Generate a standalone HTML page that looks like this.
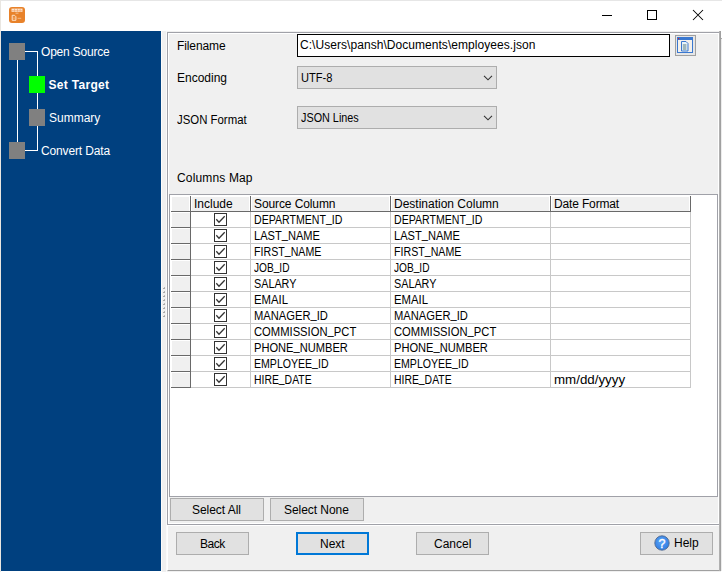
<!DOCTYPE html>
<html><head><meta charset="utf-8"><style>
*{margin:0;padding:0;box-sizing:border-box}
html,body{width:722px;height:572px;overflow:hidden;background:#fff}
body{position:relative;font-family:"Liberation Sans",sans-serif;font-size:12px;color:#000}
.a{position:absolute}
.t{position:absolute;white-space:nowrap;line-height:14px;font-size:12px}
.w{color:#fff}
.b{font-weight:bold}
.sq{position:absolute;width:16px;height:17px;background:#808080}
.ln{position:absolute;background:#fff}
.btn{position:absolute;background:#e1e1e1;border:1px solid #adadad}
.cb{position:absolute;width:13px;height:13px;border:1px solid #333;background:#fff}
</style></head><body>
<div class="a" style="left:0;top:0;width:722px;height:1px;background:#e6e6e6"></div>
<div class="a" style="left:0;top:0;width:1px;height:572px;background:#e9e6e1"></div>
<svg class="a" style="left:9px;top:7px" width="16" height="16" viewBox="0 0 16 16">
<rect x="0" y="0" width="16" height="16" rx="3" fill="#e8822a"/>
<rect x="2.5" y="1.6" width="11" height="3.2" fill="#fde4cc"/>
<rect x="5.2" y="1.6" width="0.6" height="3.2" fill="#eea066"/><rect x="8" y="1.6" width="0.6" height="3.2" fill="#eea066"/><rect x="10.8" y="1.6" width="0.6" height="3.2" fill="#eea066"/>
<rect x="2.5" y="3.1" width="11" height="0.5" fill="#eea066"/>
<rect x="6.5" y="5.7" width="3" height="0.9" fill="#f4c59c"/>
<path d="M3.2 8.3h2.3l1.4 1.4v3.6h-3.7z" fill="none" stroke="#fde4cc" stroke-width="1"/>
<path d="M4.2 10.2h1.6M4.2 11.6h1.6" stroke="#f3c090" stroke-width="0.6"/>
<rect x="8.6" y="10.8" width="3.6" height="1" fill="#f2b889"/>
</svg>
<div class="a" style="left:602px;top:15px;width:10px;height:1px;background:#000"></div>
<div class="a" style="left:647px;top:10px;width:10px;height:10px;border:1px solid #000"></div>
<svg class="a" style="left:692px;top:9px" width="12" height="12" viewBox="0 0 12 12"><path d="M1 1L11 11M11 1L1 11" stroke="#000" stroke-width="1.05"/></svg>
<div class="a" style="left:1px;top:31px;width:160px;height:540px;background:#00407f"></div>
<div class="a" style="left:161px;top:31px;width:561px;height:541px;background:#f0f0f0"></div>
<div class="a" style="left:721px;top:31px;width:1px;height:541px;background:#fff"></div>
<div class="a" style="left:161px;top:31px;width:1px;height:541px;background:#fbfbfb"></div>
<div class="a" style="left:166px;top:31px;width:1px;height:541px;background:#fbfbfb"></div>
<div class="a" style="left:721px;top:38px;width:1px;height:1px;background:#a8a8a8"></div>
<div class="a" style="left:721px;top:39px;width:1px;height:532px;background:#ececec"></div>
<div class="ln" style="left:25px;top:51px;width:13px;height:1px"></div>
<div class="ln" style="left:37px;top:51px;width:1px;height:100px"></div>
<div class="ln" style="left:17px;top:60px;width:1px;height:82px"></div>
<div class="ln" style="left:25px;top:150px;width:13px;height:1px"></div>
<div class="sq" style="left:9px;top:43px"></div>
<div class="sq" style="left:29px;top:76px;background:#00ff00"></div>
<div class="sq" style="left:29px;top:109px"></div>
<div class="sq" style="left:9px;top:142px"></div>
<div class="t w" style="left:41px;top:45px;letter-spacing:-0.2px;">Open Source</div>
<div class="t w b" style="left:48.5px;top:78px;letter-spacing:0.3px;">Set Target</div>
<div class="t w" style="left:49px;top:111px;">Summary</div>
<div class="t w" style="left:41px;top:143.5px;letter-spacing:-0.15px;">Convert Data</div>
<svg class="a" style="left:163px;top:287px" width="2" height="2"><rect x="1" y="0" width="1" height="1" fill="#b8b8b8"/><rect x="0" y="1" width="2" height="1" fill="#a8a8a8"/></svg>
<svg class="a" style="left:163px;top:291px" width="2" height="2"><rect x="1" y="0" width="1" height="1" fill="#b8b8b8"/><rect x="0" y="1" width="2" height="1" fill="#a8a8a8"/></svg>
<svg class="a" style="left:163px;top:295px" width="2" height="2"><rect x="1" y="0" width="1" height="1" fill="#b8b8b8"/><rect x="0" y="1" width="2" height="1" fill="#a8a8a8"/></svg>
<svg class="a" style="left:163px;top:299px" width="2" height="2"><rect x="1" y="0" width="1" height="1" fill="#b8b8b8"/><rect x="0" y="1" width="2" height="1" fill="#a8a8a8"/></svg>
<svg class="a" style="left:163px;top:303px" width="2" height="2"><rect x="1" y="0" width="1" height="1" fill="#b8b8b8"/><rect x="0" y="1" width="2" height="1" fill="#a8a8a8"/></svg>
<svg class="a" style="left:163px;top:307px" width="2" height="2"><rect x="1" y="0" width="1" height="1" fill="#b8b8b8"/><rect x="0" y="1" width="2" height="1" fill="#a8a8a8"/></svg>
<svg class="a" style="left:163px;top:311px" width="2" height="2"><rect x="1" y="0" width="1" height="1" fill="#b8b8b8"/><rect x="0" y="1" width="2" height="1" fill="#a8a8a8"/></svg>
<svg class="a" style="left:163px;top:315px" width="2" height="2"><rect x="1" y="0" width="1" height="1" fill="#b8b8b8"/><rect x="0" y="1" width="2" height="1" fill="#a8a8a8"/></svg>
<div class="a" style="left:167px;top:32px;width:553px;height:493px;border:1px solid #a0a1a8;border-right:none"></div>
<div class="a" style="left:168px;top:33px;width:551px;height:491px;border-top:1px solid #fff;border-left:1px solid #fff;border-bottom:1px solid #fff;border-right:1px solid #fff"></div>
<div class="a" style="left:167px;top:525px;width:554px;height:46px;border-top:1px solid #fff;border-left:1px solid #fff;border-right:1px solid #a0a0a0;border-bottom:1px solid #a0a0a0"></div>
<div class="a" style="left:719px;top:31px;width:1px;height:540px;background:#b0b0b0"></div>
<div class="a" style="left:720px;top:31px;width:1px;height:540px;background:#a0a0a0"></div>
<div class="t " style="left:177px;top:39px;letter-spacing:-0.1px;">Filename</div>
<div class="t " style="left:177px;top:71px;">Encoding</div>
<div class="t" style="left:177px;top:113px;transform:scaleX(0.95);transform-origin:0 0">JSON Format</div>
<div class="t " style="left:177px;top:171px;letter-spacing:0.15px;">Columns Map</div>
<div class="a" style="left:297px;top:34px;width:373px;height:23px;border:1px solid #000;background:#fff"></div>
<div class="t " style="left:300px;top:38px;letter-spacing:0.05px;">C:\Users\pansh\Documents\employees.json</div>
<div class="a" style="left:675px;top:35px;width:21px;height:21px;border:1px solid #a0a0a0;background:#e6e6e6"></div>
<svg class="a" style="left:677px;top:37px" width="16" height="16" viewBox="0 0 16 16">
<rect x="0.5" y="0.5" width="15" height="15" fill="#f4f1ec" stroke="#3a78d0"/>
<rect x="0" y="0" width="16" height="3" fill="#3a78d0"/>
<rect x="1" y="1" width="1.2" height="1.2" fill="#e02020"/>
<path d="M4.5 4.5h4.5l2 2v7.5h-6.5z" fill="#e6f4fa" stroke="#3a78d0"/>
<rect x="5.8" y="7.5" width="3.6" height="1" fill="#5a7a7a"/><rect x="5.8" y="9.5" width="3.6" height="1" fill="#5a7a7a"/><rect x="5.8" y="11.5" width="3.6" height="1" fill="#5a7a7a"/>
</svg>
<div class="btn" style="left:297px;top:66px;width:200px;height:23px"></div>
<svg class="a" style="left:483px;top:75px" width="10" height="6" viewBox="0 0 10 6"><path d="M1 0.8L5 4.8L9 0.8" fill="none" stroke="#333" stroke-width="1.1"/></svg>
<div class="t" style="left:301px;top:71px;transform:scaleX(0.924);transform-origin:0 0">UTF-8</div>
<div class="btn" style="left:297px;top:106px;width:200px;height:23px"></div>
<svg class="a" style="left:483px;top:115px" width="10" height="6" viewBox="0 0 10 6"><path d="M1 0.8L5 4.8L9 0.8" fill="none" stroke="#333" stroke-width="1.1"/></svg>
<div class="t" style="left:301px;top:110.7px;transform:scaleX(0.902);transform-origin:0 0">JSON Lines</div>
<div class="a" style="left:169px;top:194px;width:549px;height:303px;border:1px solid #a0a1a8;background:#fff"></div>
<div class="a" style="left:170px;top:195px;width:521px;height:16px;background:#fff"></div>
<div class="a" style="left:172px;top:197px;width:17px;height:14px;background:#f0f0f0"></div>
<div class="a" style="left:192px;top:197px;width:57px;height:14px;background:#f0f0f0"></div>
<div class="a" style="left:252px;top:197px;width:137px;height:14px;background:#f0f0f0"></div>
<div class="a" style="left:392px;top:197px;width:157px;height:14px;background:#f0f0f0"></div>
<div class="a" style="left:552px;top:197px;width:137px;height:14px;background:#f0f0f0"></div>
<div class="a" style="left:171px;top:211px;width:520px;height:1px;background:#696969"></div>
<div class="a" style="left:190px;top:196px;width:1px;height:16px;background:#696969"></div>
<div class="a" style="left:250px;top:196px;width:1px;height:16px;background:#696969"></div>
<div class="a" style="left:390px;top:196px;width:1px;height:16px;background:#696969"></div>
<div class="a" style="left:550px;top:196px;width:1px;height:16px;background:#696969"></div>
<div class="a" style="left:690px;top:196px;width:1px;height:16px;background:#696969"></div>
<div class="t " style="left:194px;top:196.5px;">Include</div>
<div class="t " style="left:254px;top:196.5px;letter-spacing:-0.1px;">Source Column</div>
<div class="t " style="left:394px;top:196.5px;">Destination Column</div>
<div class="t " style="left:554px;top:196.5px;letter-spacing:-0.15px;">Date Format</div>
<div class="a" style="left:172px;top:213px;width:18px;height:14px;background:#f0f0f0"></div>
<div class="a" style="left:171px;top:227px;width:20px;height:1px;background:#696969"></div>
<div class="a" style="left:190px;top:212px;width:1px;height:16px;background:#696969"></div>
<div class="a" style="left:191px;top:227px;width:500px;height:1px;background:#c8c8c8"></div>
<div class="a" style="left:250px;top:212px;width:1px;height:16px;background:#c8c8c8"></div>
<div class="a" style="left:390px;top:212px;width:1px;height:16px;background:#c8c8c8"></div>
<div class="a" style="left:550px;top:212px;width:1px;height:16px;background:#c8c8c8"></div>
<div class="a" style="left:690px;top:212px;width:1px;height:16px;background:#c8c8c8"></div>
<div class="cb" style="left:214px;top:213px"></div>
<svg class="a" style="left:214px;top:213px" width="13" height="13" viewBox="0 0 13 13"><path d="M2.3 6.3L5 9.2L10.7 3.2" fill="none" stroke="#333" stroke-width="1.3"/></svg>
<div class="t" style="left:254px;top:212.7px;transform:scaleX(0.882);transform-origin:0 0">DEPARTMENT<span style="position:relative;top:-2px">_</span>ID</div>
<div class="t" style="left:394px;top:212.7px;transform:scaleX(0.882);transform-origin:0 0">DEPARTMENT<span style="position:relative;top:-2px">_</span>ID</div>
<div class="a" style="left:172px;top:229px;width:18px;height:14px;background:#f0f0f0"></div>
<div class="a" style="left:171px;top:243px;width:20px;height:1px;background:#696969"></div>
<div class="a" style="left:190px;top:228px;width:1px;height:16px;background:#696969"></div>
<div class="a" style="left:191px;top:243px;width:500px;height:1px;background:#c8c8c8"></div>
<div class="a" style="left:250px;top:228px;width:1px;height:16px;background:#c8c8c8"></div>
<div class="a" style="left:390px;top:228px;width:1px;height:16px;background:#c8c8c8"></div>
<div class="a" style="left:550px;top:228px;width:1px;height:16px;background:#c8c8c8"></div>
<div class="a" style="left:690px;top:228px;width:1px;height:16px;background:#c8c8c8"></div>
<div class="cb" style="left:214px;top:229px"></div>
<svg class="a" style="left:214px;top:229px" width="13" height="13" viewBox="0 0 13 13"><path d="M2.3 6.3L5 9.2L10.7 3.2" fill="none" stroke="#333" stroke-width="1.3"/></svg>
<div class="t" style="left:254px;top:228.7px;transform:scaleX(0.924);transform-origin:0 0">LAST<span style="position:relative;top:-2px">_</span>NAME</div>
<div class="t" style="left:394px;top:228.7px;transform:scaleX(0.924);transform-origin:0 0">LAST<span style="position:relative;top:-2px">_</span>NAME</div>
<div class="a" style="left:172px;top:245px;width:18px;height:14px;background:#f0f0f0"></div>
<div class="a" style="left:171px;top:259px;width:20px;height:1px;background:#696969"></div>
<div class="a" style="left:190px;top:244px;width:1px;height:16px;background:#696969"></div>
<div class="a" style="left:191px;top:259px;width:500px;height:1px;background:#c8c8c8"></div>
<div class="a" style="left:250px;top:244px;width:1px;height:16px;background:#c8c8c8"></div>
<div class="a" style="left:390px;top:244px;width:1px;height:16px;background:#c8c8c8"></div>
<div class="a" style="left:550px;top:244px;width:1px;height:16px;background:#c8c8c8"></div>
<div class="a" style="left:690px;top:244px;width:1px;height:16px;background:#c8c8c8"></div>
<div class="cb" style="left:214px;top:245px"></div>
<svg class="a" style="left:214px;top:245px" width="13" height="13" viewBox="0 0 13 13"><path d="M2.3 6.3L5 9.2L10.7 3.2" fill="none" stroke="#333" stroke-width="1.3"/></svg>
<div class="t" style="left:254px;top:244.7px;transform:scaleX(0.887);transform-origin:0 0">FIRST<span style="position:relative;top:-2px">_</span>NAME</div>
<div class="t" style="left:394px;top:244.7px;transform:scaleX(0.887);transform-origin:0 0">FIRST<span style="position:relative;top:-2px">_</span>NAME</div>
<div class="a" style="left:172px;top:261px;width:18px;height:14px;background:#f0f0f0"></div>
<div class="a" style="left:171px;top:275px;width:20px;height:1px;background:#696969"></div>
<div class="a" style="left:190px;top:260px;width:1px;height:16px;background:#696969"></div>
<div class="a" style="left:191px;top:275px;width:500px;height:1px;background:#c8c8c8"></div>
<div class="a" style="left:250px;top:260px;width:1px;height:16px;background:#c8c8c8"></div>
<div class="a" style="left:390px;top:260px;width:1px;height:16px;background:#c8c8c8"></div>
<div class="a" style="left:550px;top:260px;width:1px;height:16px;background:#c8c8c8"></div>
<div class="a" style="left:690px;top:260px;width:1px;height:16px;background:#c8c8c8"></div>
<div class="cb" style="left:214px;top:261px"></div>
<svg class="a" style="left:214px;top:261px" width="13" height="13" viewBox="0 0 13 13"><path d="M2.3 6.3L5 9.2L10.7 3.2" fill="none" stroke="#333" stroke-width="1.3"/></svg>
<div class="t" style="left:254px;top:260.7px;transform:scaleX(0.843);transform-origin:0 0">JOB<span style="position:relative;top:-2px">_</span>ID</div>
<div class="t" style="left:394px;top:260.7px;transform:scaleX(0.843);transform-origin:0 0">JOB<span style="position:relative;top:-2px">_</span>ID</div>
<div class="a" style="left:172px;top:277px;width:18px;height:14px;background:#f0f0f0"></div>
<div class="a" style="left:171px;top:291px;width:20px;height:1px;background:#696969"></div>
<div class="a" style="left:190px;top:276px;width:1px;height:16px;background:#696969"></div>
<div class="a" style="left:191px;top:291px;width:500px;height:1px;background:#c8c8c8"></div>
<div class="a" style="left:250px;top:276px;width:1px;height:16px;background:#c8c8c8"></div>
<div class="a" style="left:390px;top:276px;width:1px;height:16px;background:#c8c8c8"></div>
<div class="a" style="left:550px;top:276px;width:1px;height:16px;background:#c8c8c8"></div>
<div class="a" style="left:690px;top:276px;width:1px;height:16px;background:#c8c8c8"></div>
<div class="cb" style="left:214px;top:277px"></div>
<svg class="a" style="left:214px;top:277px" width="13" height="13" viewBox="0 0 13 13"><path d="M2.3 6.3L5 9.2L10.7 3.2" fill="none" stroke="#333" stroke-width="1.3"/></svg>
<div class="t" style="left:254px;top:276.7px;transform:scaleX(0.9);transform-origin:0 0">SALARY</div>
<div class="t" style="left:394px;top:276.7px;transform:scaleX(0.9);transform-origin:0 0">SALARY</div>
<div class="a" style="left:172px;top:293px;width:18px;height:14px;background:#f0f0f0"></div>
<div class="a" style="left:171px;top:307px;width:20px;height:1px;background:#696969"></div>
<div class="a" style="left:190px;top:292px;width:1px;height:16px;background:#696969"></div>
<div class="a" style="left:191px;top:307px;width:500px;height:1px;background:#c8c8c8"></div>
<div class="a" style="left:250px;top:292px;width:1px;height:16px;background:#c8c8c8"></div>
<div class="a" style="left:390px;top:292px;width:1px;height:16px;background:#c8c8c8"></div>
<div class="a" style="left:550px;top:292px;width:1px;height:16px;background:#c8c8c8"></div>
<div class="a" style="left:690px;top:292px;width:1px;height:16px;background:#c8c8c8"></div>
<div class="cb" style="left:214px;top:293px"></div>
<svg class="a" style="left:214px;top:293px" width="13" height="13" viewBox="0 0 13 13"><path d="M2.3 6.3L5 9.2L10.7 3.2" fill="none" stroke="#333" stroke-width="1.3"/></svg>
<div class="t" style="left:254px;top:292.7px;transform:scaleX(0.943);transform-origin:0 0">EMAIL</div>
<div class="t" style="left:394px;top:292.7px;transform:scaleX(0.943);transform-origin:0 0">EMAIL</div>
<div class="a" style="left:172px;top:309px;width:18px;height:14px;background:#f0f0f0"></div>
<div class="a" style="left:171px;top:323px;width:20px;height:1px;background:#696969"></div>
<div class="a" style="left:190px;top:308px;width:1px;height:16px;background:#696969"></div>
<div class="a" style="left:191px;top:323px;width:500px;height:1px;background:#c8c8c8"></div>
<div class="a" style="left:250px;top:308px;width:1px;height:16px;background:#c8c8c8"></div>
<div class="a" style="left:390px;top:308px;width:1px;height:16px;background:#c8c8c8"></div>
<div class="a" style="left:550px;top:308px;width:1px;height:16px;background:#c8c8c8"></div>
<div class="a" style="left:690px;top:308px;width:1px;height:16px;background:#c8c8c8"></div>
<div class="cb" style="left:214px;top:309px"></div>
<svg class="a" style="left:214px;top:309px" width="13" height="13" viewBox="0 0 13 13"><path d="M2.3 6.3L5 9.2L10.7 3.2" fill="none" stroke="#333" stroke-width="1.3"/></svg>
<div class="t" style="left:254px;top:308.7px;transform:scaleX(0.931);transform-origin:0 0">MANAGER<span style="position:relative;top:-2px">_</span>ID</div>
<div class="t" style="left:394px;top:308.7px;transform:scaleX(0.931);transform-origin:0 0">MANAGER<span style="position:relative;top:-2px">_</span>ID</div>
<div class="a" style="left:172px;top:325px;width:18px;height:14px;background:#f0f0f0"></div>
<div class="a" style="left:171px;top:339px;width:20px;height:1px;background:#696969"></div>
<div class="a" style="left:190px;top:324px;width:1px;height:16px;background:#696969"></div>
<div class="a" style="left:191px;top:339px;width:500px;height:1px;background:#c8c8c8"></div>
<div class="a" style="left:250px;top:324px;width:1px;height:16px;background:#c8c8c8"></div>
<div class="a" style="left:390px;top:324px;width:1px;height:16px;background:#c8c8c8"></div>
<div class="a" style="left:550px;top:324px;width:1px;height:16px;background:#c8c8c8"></div>
<div class="a" style="left:690px;top:324px;width:1px;height:16px;background:#c8c8c8"></div>
<div class="cb" style="left:214px;top:325px"></div>
<svg class="a" style="left:214px;top:325px" width="13" height="13" viewBox="0 0 13 13"><path d="M2.3 6.3L5 9.2L10.7 3.2" fill="none" stroke="#333" stroke-width="1.3"/></svg>
<div class="t" style="left:254px;top:324.7px;transform:scaleX(0.935);transform-origin:0 0">COMMISSION<span style="position:relative;top:-2px">_</span>PCT</div>
<div class="t" style="left:394px;top:324.7px;transform:scaleX(0.935);transform-origin:0 0">COMMISSION<span style="position:relative;top:-2px">_</span>PCT</div>
<div class="a" style="left:172px;top:341px;width:18px;height:14px;background:#f0f0f0"></div>
<div class="a" style="left:171px;top:355px;width:20px;height:1px;background:#696969"></div>
<div class="a" style="left:190px;top:340px;width:1px;height:16px;background:#696969"></div>
<div class="a" style="left:191px;top:355px;width:500px;height:1px;background:#c8c8c8"></div>
<div class="a" style="left:250px;top:340px;width:1px;height:16px;background:#c8c8c8"></div>
<div class="a" style="left:390px;top:340px;width:1px;height:16px;background:#c8c8c8"></div>
<div class="a" style="left:550px;top:340px;width:1px;height:16px;background:#c8c8c8"></div>
<div class="a" style="left:690px;top:340px;width:1px;height:16px;background:#c8c8c8"></div>
<div class="cb" style="left:214px;top:341px"></div>
<svg class="a" style="left:214px;top:341px" width="13" height="13" viewBox="0 0 13 13"><path d="M2.3 6.3L5 9.2L10.7 3.2" fill="none" stroke="#333" stroke-width="1.3"/></svg>
<div class="t" style="left:254px;top:340.7px;transform:scaleX(0.926);transform-origin:0 0">PHONE<span style="position:relative;top:-2px">_</span>NUMBER</div>
<div class="t" style="left:394px;top:340.7px;transform:scaleX(0.926);transform-origin:0 0">PHONE<span style="position:relative;top:-2px">_</span>NUMBER</div>
<div class="a" style="left:172px;top:357px;width:18px;height:14px;background:#f0f0f0"></div>
<div class="a" style="left:171px;top:371px;width:20px;height:1px;background:#696969"></div>
<div class="a" style="left:190px;top:356px;width:1px;height:16px;background:#696969"></div>
<div class="a" style="left:191px;top:371px;width:500px;height:1px;background:#c8c8c8"></div>
<div class="a" style="left:250px;top:356px;width:1px;height:16px;background:#c8c8c8"></div>
<div class="a" style="left:390px;top:356px;width:1px;height:16px;background:#c8c8c8"></div>
<div class="a" style="left:550px;top:356px;width:1px;height:16px;background:#c8c8c8"></div>
<div class="a" style="left:690px;top:356px;width:1px;height:16px;background:#c8c8c8"></div>
<div class="cb" style="left:214px;top:357px"></div>
<svg class="a" style="left:214px;top:357px" width="13" height="13" viewBox="0 0 13 13"><path d="M2.3 6.3L5 9.2L10.7 3.2" fill="none" stroke="#333" stroke-width="1.3"/></svg>
<div class="t" style="left:254px;top:356.7px;transform:scaleX(0.88);transform-origin:0 0">EMPLOYEE<span style="position:relative;top:-2px">_</span>ID</div>
<div class="t" style="left:394px;top:356.7px;transform:scaleX(0.88);transform-origin:0 0">EMPLOYEE<span style="position:relative;top:-2px">_</span>ID</div>
<div class="a" style="left:172px;top:373px;width:18px;height:14px;background:#f0f0f0"></div>
<div class="a" style="left:171px;top:387px;width:20px;height:1px;background:#696969"></div>
<div class="a" style="left:190px;top:372px;width:1px;height:16px;background:#696969"></div>
<div class="a" style="left:191px;top:387px;width:500px;height:1px;background:#c8c8c8"></div>
<div class="a" style="left:250px;top:372px;width:1px;height:16px;background:#c8c8c8"></div>
<div class="a" style="left:390px;top:372px;width:1px;height:16px;background:#c8c8c8"></div>
<div class="a" style="left:550px;top:372px;width:1px;height:16px;background:#c8c8c8"></div>
<div class="a" style="left:690px;top:372px;width:1px;height:16px;background:#c8c8c8"></div>
<div class="cb" style="left:214px;top:373px"></div>
<svg class="a" style="left:214px;top:373px" width="13" height="13" viewBox="0 0 13 13"><path d="M2.3 6.3L5 9.2L10.7 3.2" fill="none" stroke="#333" stroke-width="1.3"/></svg>
<div class="t" style="left:254px;top:372.7px;transform:scaleX(0.866);transform-origin:0 0">HIRE<span style="position:relative;top:-2px">_</span>DATE</div>
<div class="t" style="left:394px;top:372.7px;transform:scaleX(0.866);transform-origin:0 0">HIRE<span style="position:relative;top:-2px">_</span>DATE</div>
<div class="t" style="left:554px;top:372.7px;transform:scaleX(1.11);transform-origin:0 0">mm/dd/yyyy</div>
<div class="btn" style="left:170px;top:498px;width:94px;height:23px"></div>
<div class="btn" style="left:270px;top:498px;width:94px;height:23px"></div>
<div class="t " style="left:192px;top:503px;letter-spacing:-0.05px;">Select All</div>
<div class="t " style="left:284px;top:503px;letter-spacing:-0.05px;">Select None</div>
<div class="btn" style="left:176px;top:532px;width:73px;height:23px"></div>
<div class="btn" style="left:296px;top:532px;width:73px;height:23px;border:2px solid #0078d7"></div>
<div class="btn" style="left:416px;top:532px;width:73px;height:23px"></div>
<div class="btn" style="left:640px;top:532px;width:73px;height:23px"></div>
<div class="t " style="left:200px;top:536.6px;letter-spacing:-0.5px;">Back</div>
<div class="t " style="left:320px;top:536.6px;">Next</div>
<div class="t " style="left:434px;top:536.6px;">Cancel</div>
<div class="t " style="left:674px;top:535.6px;">Help</div>
<svg class="a" style="left:654px;top:535px" width="16" height="16" viewBox="0 0 16 16">
<defs><radialGradient id="hg" cx="0.45" cy="0.4" r="0.6"><stop offset="0" stop-color="#5da4f6"/><stop offset="1" stop-color="#2f7de2"/></radialGradient></defs>
<circle cx="8" cy="8" r="7.2" fill="url(#hg)" stroke="#50698f" stroke-width="0.9"/>
<text x="8.1" y="12.6" text-anchor="middle" font-family="Liberation Sans" font-size="12.5" fill="#fff" stroke="#fff" stroke-width="0.35">?</text>
</svg>
</body></html>
